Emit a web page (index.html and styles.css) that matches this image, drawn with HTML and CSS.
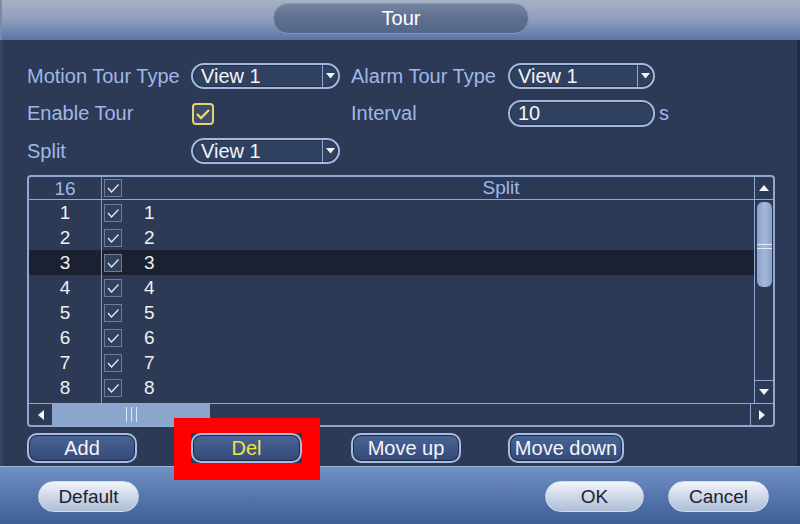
FILE: index.html
```html
<!DOCTYPE html>
<html>
<head>
  <title>Tour</title>
  <link rel="stylesheet" href="styles.css">
</head>
<body>
  <div class="window">
    <div class="titlebar">
      <div class="title">Tour</div>
    </div>

    <div class="content">
      <div class="form">
        <span class="label">Motion Tour Type</span>
        <div class="select"><span>View 1</span><i class="drop"><svg width="9" height="6" viewBox="0 0 9 6"><polygon points="0,0 9,0 4.5,5.5" fill="#f2f4f8"/></svg></i></div>
        <span class="label">Alarm Tour Type</span>
        <div class="select narrow"><span>View 1</span><i class="drop"><svg width="9" height="6" viewBox="0 0 9 6"><polygon points="0,0 9,0 4.5,5.5" fill="#f2f4f8"/></svg></i></div>

        <span class="label">Enable Tour</span>
        <div><span class="tick"><svg width="16" height="14" viewBox="0 0 16 14"><path d="M2 7 L6 11 L14 3" fill="none" stroke="#ecd862" stroke-width="2.4"/></svg></span></div>
        <span class="label">Interval</span>
        <div class="field-row"><div class="input">10</div><span class="label">s</span></div>

        <span class="label">Split</span>
        <div class="select"><span>View 1</span><i class="drop"><svg width="9" height="6" viewBox="0 0 9 6"><polygon points="0,0 9,0 4.5,5.5" fill="#f2f4f8"/></svg></i></div>
      </div>

      <div class="grid">
        <div class="grid-head">
          <span class="num head-text">16</span>
          <span class="box"><svg width="16" height="16" viewBox="0 0 16 16"><path d="M3 8 L6.5 12 L13.5 4.5" fill="none" stroke="#e8ecf4" stroke-width="1.2"/></svg></span>
          <span class="split head-text">Split</span>
          <span class="vcell"><svg width="10" height="6" viewBox="0 0 10 6"><polygon points="5,0 10,6 0,6" fill="#f2f4f8"/></svg></span>
        </div>

        <div class="grid-body">
          <div class="rows" id="rows"></div>
          <div class="vscroll">
            <div class="vtrack"><div class="vthumb"><i></i></div></div>
            <div class="vcell down"><svg width="10" height="6" viewBox="0 0 10 6"><polygon points="0,0 10,0 5,6" fill="#f2f4f8"/></svg></div>
          </div>
        </div>

        <div class="hscroll">
          <span class="hcell"><svg width="6" height="10" viewBox="0 0 6 10"><polygon points="6,0 6,10 0,5" fill="#f2f4f8"/></svg></span>
          <span class="hthumb"><i></i><i></i><i></i></span>
          <span class="hspace"></span>
          <span class="hcell right"><svg width="6" height="10" viewBox="0 0 6 10"><polygon points="0,0 6,5 0,10" fill="#f2f4f8"/></svg></span>
        </div>
      </div>

      <div class="actions">
        <div><button class="btn">Add</button></div>
        <div><span class="mark"><button class="btn del">Del</button></span></div>
        <div><button class="btn">Move up</button></div>
        <div><button class="btn wide">Move down</button></div>
      </div>
    </div>

    <div class="footer">
      <button class="fbtn">Default</button>
      <span class="spacer"></span>
      <button class="fbtn ok">OK</button>
      <button class="fbtn">Cancel</button>
    </div>
  </div>

  <script>
const rows = document.getElementById("rows");
const tick = '<svg width="16" height="16" viewBox="0 0 16 16"><path d="M3 8 L6.5 12 L13.5 4.5" fill="none" stroke="#e8ecf4" stroke-width="1.2"/></svg>';

for (let i = 1; i <= 9; i++) {
  const row = document.createElement("div");
  row.className = i === 3 ? "row current" : "row";
  row.innerHTML = `
    <span class="num">${i}</span>
    <span class="box">${tick}</span>
    <span class="val">${i}</span>
  `;
  rows.appendChild(row);
}
  </script>
</body>
</html>
```

FILE: styles.css
```css
* {
  box-sizing: border-box;
}

body {
  margin: 0;
  background: #2c3a55;
  font-family: "Liberation Sans", Arial, sans-serif;
}

.window {
  width: 800px;
  height: 524px;
  display: flex;
  flex-direction: column;
  background: #2c3a55;
}

.titlebar {
  height: 40px;
  flex: none;
  display: flex;
  justify-content: center;
  padding-top: 3px;
  border-left: 2px solid #7d8aa5;
  background: linear-gradient(#a7b1c3, #8d9dbc 50%, #5a75a7);
}

.title {
  width: 256px;
  height: 31px;
  border: 1px solid #8996b2;
  border-radius: 15px;
  background: linear-gradient(#75849f, #5f6f90 50%, #54668b);
  color: #fff;
  font-size: 20px;
  line-height: 29px;
  text-align: center;
}

.content {
  flex: 1;
  padding: 23px 0 0 24px;
  border-left: 3px solid #36445f;
  border-right: 3px solid #1f2a3f;
}

.form,
.actions {
  display: grid;
  grid-template-columns: 164px 160px 157px 1fr;
}

.form {
  grid-template-rows: 26px 27px 26px;
  row-gap: 11px;
  align-items: center;
}

.label {
  color: #9fb7ea;
  font-size: 20px;
}

.select,
.input {
  height: 26px;
  width: 149px;
  display: flex;
  align-items: center;
  border: 2px solid #a3b9df;
  border-radius: 13px;
  background: #30405f;
  box-shadow: inset 0 0 0 1px #22304a;
  color: #f2f4f8;
  font-size: 20px;
}

.select.narrow,
.input {
  width: 147px;
}

.input {
  height: 27px;
  padding-left: 8px;
}

.select span {
  flex: 1;
  padding-left: 8px;
}

.drop {
  width: 16px;
  align-self: stretch;
  display: flex;
  align-items: center;
  justify-content: center;
  border-left: 1px solid #8ea4c8;
}

.field-row {
  display: flex;
  align-items: center;
  gap: 4px;
}

.tick {
  width: 22px;
  height: 22px;
  margin-left: 1px;
  display: flex;
  align-items: center;
  justify-content: center;
  border: 2px solid #e3d36a;
  border-radius: 4px;
  background: #3d4c6c;
}

/* table */

.grid {
  width: 748px;
  margin-top: 11px;
  display: flex;
  flex-direction: column;
  border: 2px solid #8ea7d3;
  border-radius: 4px;
}

.grid-head {
  height: 23px;
  display: flex;
  align-items: center;
  border-bottom: 1px solid #8ea7d3;
}

.head-text {
  color: #9fb7ea;
}

.num {
  width: 73px;
  align-self: stretch;
  border-right: 1px solid #7f98c6;
  text-align: center;
  font-size: 19px;
  line-height: 24px;
}

.box {
  width: 18px;
  height: 18px;
  margin-left: 2px;
  display: flex;
  align-items: center;
  justify-content: center;
  border: 1px solid #6c7d9e;
  background: #33405c;
}

.split {
  flex: 1;
  padding-left: 126px;
  text-align: center;
  font-size: 19px;
}

.vcell {
  width: 19px;
  align-self: stretch;
  display: flex;
  align-items: center;
  justify-content: center;
  border-left: 1px solid #8ea7d3;
}

.grid-body {
  height: 203px;
  display: flex;
}

.rows {
  flex: 1;
  overflow: hidden;
}

.row {
  height: 25px;
  display: flex;
  align-items: center;
  color: #eef0f4;
}

.row .num {
  line-height: 25px;
}

.row.current {
  background: #1b2130;
}

.val {
  padding-left: 22px;
  font-size: 19px;
}

.vscroll {
  width: 19px;
  display: flex;
  flex-direction: column;
  border-left: 1px solid #8ea7d3;
}

.vtrack {
  flex: 1;
  padding: 2px 1px 0 2px;
}

.vthumb {
  height: 85px;
  display: flex;
  align-items: center;
  border-radius: 6px;
  background: linear-gradient(90deg, #8ba3c9, #a3b8da 50%, #8aa2c8);
}

.vthumb i {
  width: 100%;
  height: 5px;
  margin-top: 4px;
  border-top: 1px solid #e2eaf6;
  border-bottom: 1px solid #e2eaf6;
}

.vcell.down {
  width: auto;
  height: 23px;
  flex: none;
  border-left: 0;
  border-top: 1px solid #8ea7d3;
}

.hscroll {
  height: 22px;
  display: flex;
  border-top: 1px solid #8ea7d3;
}

.hcell {
  width: 23px;
  display: flex;
  align-items: center;
  justify-content: center;
}

.hcell.right {
  border-left: 1px solid #8ea7d3;
}

.hthumb {
  width: 158px;
  display: flex;
  justify-content: center;
  gap: 4px;
  padding-top: 3px;
  padding-bottom: 3px;
  background: #8ca5cd;
}

.hthumb i {
  width: 1px;
  background: #dfe7f4;
}

.hspace {
  flex: 1;
}

/* buttons */

.actions {
  margin-top: 6px;
}

.btn {
  width: 110px;
  height: 30px;
  padding: 0;
  border: 2px solid #a6bce2;
  border-radius: 10px;
  background: linear-gradient(#4a6595, #34497a);
  box-shadow: inset 0 0 0 1px #1f2b45;
  color: #f4f6fa;
  font-family: inherit;
  font-size: 20px;
}

.btn.wide {
  width: 116px;
}

.btn.del {
  width: 111px;
  color: #f0e14a;
}

.mark {
  position: relative;
  z-index: 1;
  display: inline-flex;
  margin: -15px -18px -17px -17px;
  border: solid #ff0000;
  border-width: 15px 18px 17px 17px;
}

.footer {
  height: 58px;
  flex: none;
  display: flex;
  align-items: flex-start;
  gap: 24px;
  padding: 14px 31px 0 38px;
  border-top: 1px solid #9db3da;
  background: linear-gradient(#7291c5, #5676ae 50%, #3f5e97);
}

.fbtn {
  width: 101px;
  height: 31px;
  padding: 0;
  border: 1px solid #d0dbec;
  border-radius: 16px;
  background: linear-gradient(#f1f4fa, #cad5e6 55%, #afbed5);
  color: #1c2232;
  font-family: inherit;
  font-size: 19px;
}

.fbtn.ok {
  width: 99px;
}

.spacer {
  flex: 1;
}
```
